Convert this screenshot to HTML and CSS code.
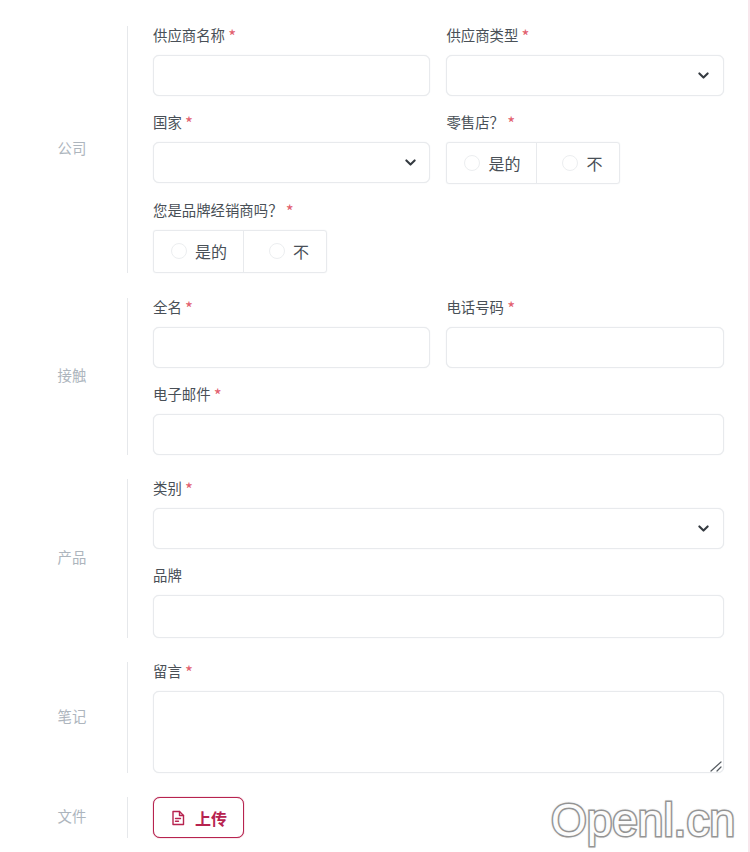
FILE: index.html
```html
<!DOCTYPE html>
<html lang="zh-CN">
<head>
    <meta charset="UTF-8">
    <meta name="viewport" content="width=device-width, initial-scale=1.0">
    <title>供应商</title>
    <link rel="stylesheet" href="styles.css">
</head>
<body>
    <form class="supplier-form">
        <div class="section">
            <div class="section-title">公司</div>
            <div class="section-body">
                <div class="field">
                    <label class="field-label">供应商名称 <span class="req">*</span></label>
                    <input type="text" class="control">
                </div>
                <div class="field">
                    <label class="field-label">供应商类型 <span class="req">*</span></label>
                    <select class="control select"></select>
                </div>
                <div class="field">
                    <label class="field-label">国家 <span class="req">*</span></label>
                    <select class="control select"></select>
                </div>
                <div class="field">
                    <label class="field-label">零售店？ <span class="req">*</span></label>
                    <div class="radio-group">
                        <label class="radio-cell"><span class="radio-dot"></span>是的</label>
                        <label class="radio-cell radio-cell-last"><span class="radio-dot"></span>不</label>
                    </div>
                </div>
                <div class="field field-wide">
                    <label class="field-label">您是品牌经销商吗？ <span class="req">*</span></label>
                    <div class="radio-group">
                        <label class="radio-cell"><span class="radio-dot"></span>是的</label>
                        <label class="radio-cell radio-cell-last"><span class="radio-dot"></span>不</label>
                    </div>
                </div>
            </div>
        </div>

        <div class="section">
            <div class="section-title">接触</div>
            <div class="section-body">
                <div class="field">
                    <label class="field-label">全名 <span class="req">*</span></label>
                    <input type="text" class="control">
                </div>
                <div class="field">
                    <label class="field-label">电话号码 <span class="req">*</span></label>
                    <input type="text" class="control">
                </div>
                <div class="field field-wide">
                    <label class="field-label">电子邮件 <span class="req">*</span></label>
                    <input type="text" class="control">
                </div>
            </div>
        </div>

        <div class="section">
            <div class="section-title">产品</div>
            <div class="section-body">
                <div class="field field-wide">
                    <label class="field-label">类别 <span class="req">*</span></label>
                    <select class="control select"></select>
                </div>
                <div class="field field-wide">
                    <label class="field-label">品牌</label>
                    <input type="text" class="control control-tall">
                </div>
            </div>
        </div>

        <div class="section">
            <div class="section-title">笔记</div>
            <div class="section-body">
                <div class="field field-wide">
                    <label class="field-label">留言 <span class="req">*</span></label>
                    <div class="textarea-wrap">
                        <textarea class="control textarea"></textarea>
                        <svg class="grip" width="14" height="12" viewBox="0 0 14 12" fill="none" stroke="#555b61" stroke-width="1.2" stroke-linecap="round">
                            <path d="M2 11L12 2M8 11l4-4"/>
                        </svg>
                    </div>
                </div>
            </div>
        </div>

        <div class="section">
            <div class="section-title">文件</div>
            <div class="section-body">
                <button type="button" class="upload-btn">
                    <svg width="16" height="16" viewBox="0 0 16 16" fill="none" stroke="currentColor" stroke-width="1.4" stroke-linejoin="round" stroke-linecap="round">
                        <path d="M3 1.5h6.5L13.500 5.500V14.500H3z"/>
                        <path d="M9.500 1.500v4h4"/>
                        <path d="M5.500 8.500h5M5.500 11.200h3"/>
                    </svg>
                    上传
                </button>
            </div>
        </div>
    </form>

    <!-- watermark -->
    <div class="watermark">Openl.cn</div>
</body>
</html>
```

FILE: styles.css
```css
html, body {
    height: 100%;
}
body {
    font-family: "Noto Sans CJK SC", "Liberation Sans", sans-serif;
    background-color: white;
    margin: 0;
    padding: 25.6px 0 0;
    box-sizing: border-box;
    border-right: 2px solid #f8e6ec;
    overflow: hidden;
    position: relative;
}
.section {
    display: flex;
    margin-bottom: 24.5px;
}
.section:first-child {
    margin-bottom: 25px;
}
.section-title {
    width: 110px;
    padding: 0 0 4px 17px;
    flex: none;
    display: flex;
    align-items: center;
    justify-content: center;
    font-size: 14.4px;
    color: #adb5bd;
}
.section-body {
    width: 570.8px;
    padding-left: 25px;
    border-left: 1px solid #e6e8eb;
    display: grid;
    grid-template-columns: 1fr 1fr;
    column-gap: 16px;
    row-gap: 17px;
}
.field {
    min-width: 0;
}
.field-wide {
    grid-column: 1 / -1;
}
.field-label {
    display: block;
    height: 29px;
    line-height: 17px;
    font-size: 14.4px;
    color: #495057;
}
.req {
    font-size: 17px;
    line-height: 0;
    vertical-align: -2px;
    color: #e2606e;
}
.control {
    display: block;
    width: 100%;
    height: 41px;
    box-sizing: border-box;
    background-color: white;
    border: 1px solid #e8eaed;
    border-radius: 6px;
    box-shadow: 0 0 1px #dfe2e6;
    outline: none;
    padding: 6px 12px;
    font-family: inherit;
    font-size: 14.4px;
}
.control-tall {
    height: 42.5px;
}
.select {
    appearance: none;
    background-image: url("data:image/svg+xml,%3csvg xmlns='http://www.w3.org/2000/svg' viewBox='0 0 16 16'%3e%3cpath fill='none' stroke='%23343a40' stroke-linecap='round' stroke-linejoin='round' stroke-width='3' d='M2 5l6 6 6-6'/%3e%3c/svg%3e");
    background-repeat: no-repeat;
    background-position: right 13.5px center;
    background-size: 11px 11px;
}
.textarea-wrap {
    position: relative;
}
.textarea {
    height: 81.5px;
    resize: none;
}
.grip {
    position: absolute;
    right: 1px;
    bottom: 1px;
}
.radio-group {
    display: inline-flex;
    height: 42.6px;
    box-sizing: border-box;
    border: 1px solid #e8eaed;
    border-radius: 3px;
    box-shadow: 0 0 1px #dfe2e6;
}
.radio-cell {
    display: flex;
    align-items: center;
    gap: 8px;
    padding: 0 16px 0 17px;
    font-size: 16px;
    color: #495057;
}
.radio-cell-last {
    border-left: 1px solid #e8eaed;
    padding: 0 17px 0 25px;
}
.radio-dot {
    width: 16px;
    height: 16px;
    box-sizing: border-box;
    border: 1.5px solid #eceef0;
    border-radius: 50%;
}
.upload-btn {
    display: flex;
    align-items: center;
    gap: 9px;
    width: 91px;
    height: 40.5px;
    padding: 0 0 0 16px;
    background: white;
    border: 1px solid #b7234f;
    border-radius: 7px;
    box-shadow: 0 0 1px #b7234f;
    color: #b7234f;
    font-family: inherit;
    font-size: 16px;
    font-weight: 700;
}
.watermark {
    position: absolute;
    right: 13px;
    bottom: 8px;
    font-family: "Liberation Sans", sans-serif;
    font-size: 46px;
    line-height: 48px;
    color: #fcfcfc;
    -webkit-text-stroke: 3px #999;
    paint-order: stroke fill;
    text-shadow: 0 0 3px #888;
}
```
